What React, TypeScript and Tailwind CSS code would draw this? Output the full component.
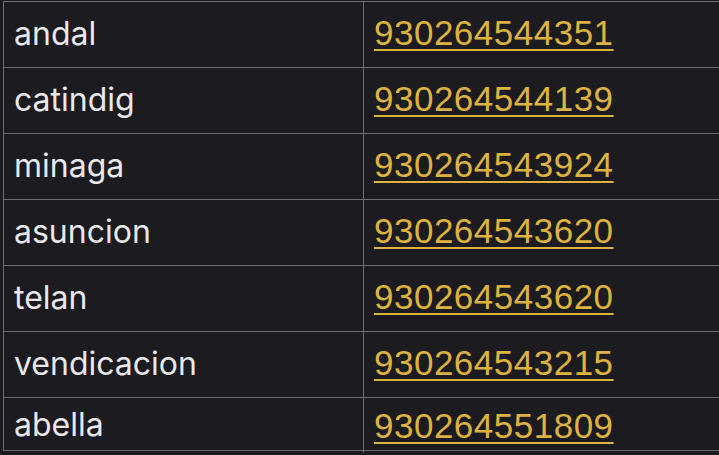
const rows = [
  { name: "andal", phone: "930264544351" },
  { name: "catindig", phone: "930264544139" },
  { name: "minaga", phone: "930264543924" },
  { name: "asuncion", phone: "930264543620" },
  { name: "telan", phone: "930264543620" },
  { name: "vendicacion", phone: "930264543215" },
  { name: "abella", phone: "930264551809" },
];

export default function App() {
  return (
    <div className="h-[455px] w-[719px] overflow-hidden bg-[#1c1b20] pt-px pl-[3px]">
      <div className="w-[760px] border-t border-l border-[#6e6d72]">
        {rows.map((r, i) => {
          const last = i === rows.length - 1;
          return (
            <div
              key={i}
              className={`grid grid-cols-[360px_1fr] border-b border-[#6e6d72] ${
                last ? "h-[53px]" : "h-[66px]"
              }`}
            >
              <div
                className={`flex border-r border-[#6e6d72] pl-[10px] font-['Inter',sans-serif] text-[32px] font-normal text-[#e9e8ec] ${
                  last ? "items-start pt-[3px]" : "items-center pb-[2px]"
                }`}
              >
                {r.name}
              </div>
              <div
                className={`flex pl-[10px] font-['Liberation_Sans',Arial,sans-serif] text-[35px] tracking-[0.5px] ${
                  last ? "items-start pt-[2px]" : "items-center pb-[3px]"
                }`}
              >
                <a
                  href="#"
                  className="text-[#ddb23f] underline decoration-2 underline-offset-[4px]"
                >
                  {r.phone}
                </a>
              </div>
            </div>
          );
        })}
      </div>
    </div>
  );
}
